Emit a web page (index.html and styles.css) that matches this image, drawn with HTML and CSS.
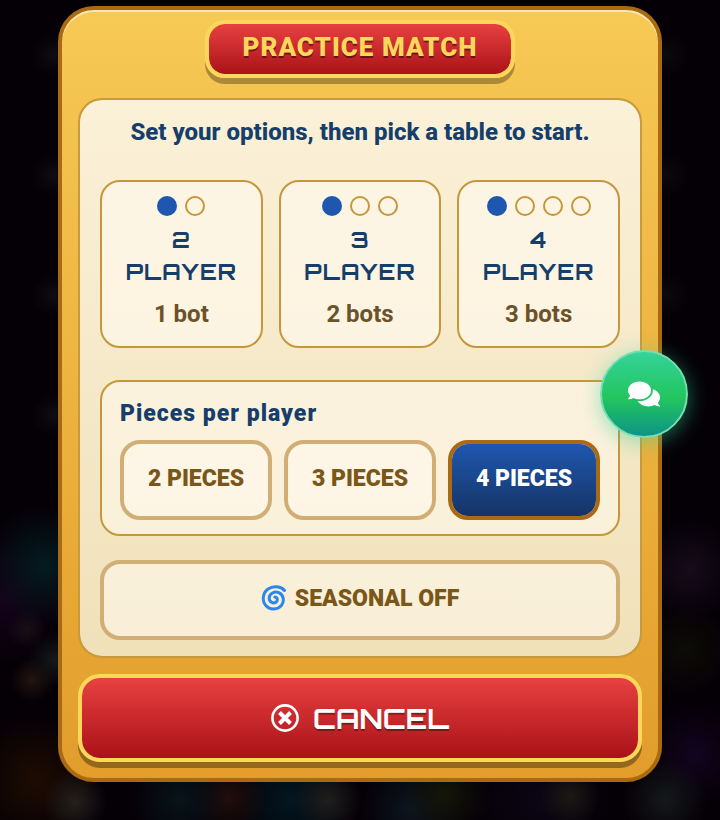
FILE: index.html
```html
<!DOCTYPE html>
<html lang="en">
<head>
  <meta charset="UTF-8" />
  <meta name="viewport" content="width=device-width, initial-scale=1.0" />
  <title>Practice Match</title>
  <link rel="stylesheet" href="styles.css">
</head>
<body>
  <main class="overlay">
    <section class="modal" role="dialog" aria-labelledby="modal-title">
      <h1 class="modal-title" id="modal-title">PRACTICE MATCH</h1>

      <div class="panel">
        <p class="intro">Set your options, then pick a table to start.</p>

        <div class="tables">
          <button type="button" class="table-card">
            <span class="seats"><i class="seat taken"></i><i class="seat"></i></span>
            <span class="table-name">2<br>PLAYER</span>
            <span class="bots">1 bot</span>
          </button>
          <button type="button" class="table-card">
            <span class="seats"><i class="seat taken"></i><i class="seat"></i><i class="seat"></i></span>
            <span class="table-name">3<br>PLAYER</span>
            <span class="bots">2 bots</span>
          </button>
          <button type="button" class="table-card">
            <span class="seats"><i class="seat taken"></i><i class="seat"></i><i class="seat"></i><i class="seat"></i></span>
            <span class="table-name">4<br>PLAYER</span>
            <span class="bots">3 bots</span>
          </button>
        </div>

        <div class="pieces" role="group" aria-labelledby="pieces-label">
          <h2 class="pieces-label" id="pieces-label">Pieces per player</h2>
          <div class="pieces-row">
            <button type="button" class="option">2 PIECES</button>
            <button type="button" class="option">3 PIECES</button>
            <button type="button" class="option active" aria-pressed="true">4 PIECES</button>
          </div>
        </div>

        <button type="button" class="option seasonal">
          <svg class="cyclone" viewBox="0 0 26 26" aria-hidden="true">
            <path d="M23.500 5.500C20 1 12 .5 7 4C1.500 8 .8 16 4.800 20.500C9 25.300 17 24.800 20.500 20.300C23.800 16 22.500 9.500 17.800 7.600C13.500 6 8.300 8.500 8.200 13C8.200 17.300 12.500 19 15.200 17C17.300 15.200 16.300 12 13.800 12" />
          </svg>
          SEASONAL OFF
        </button>
      </div>

      <button type="button" class="cancel">
        <svg class="cancel-icon" viewBox="0 0 28 28" aria-hidden="true">
          <circle cx="14" cy="14" r="12.600" />
          <path class="cross" d="M8.500 8.500l11 11M19.500 8.500l-11 11" />
        </svg>
        CANCEL
      </button>
    </section>
  </main>

  <button type="button" class="chat" aria-label="Chat">
    <svg viewBox="0 32 576 448" aria-hidden="true">
      <path d="M416 192c0-88.400-93.100-160-208-160S0 103.600 0 192c0 34.300 14.100 65.900 38 92-13.400 30.200-35.500 54.200-35.800 54.500-2.200 2.300-2.800 5.700-1.500 8.700S4.800 352 8 352c36.600 0 66.900-12.300 88.700-25 32.200 15.700 70.300 25 111.300 25 114.900 0 208-71.600 208-160zm122 220c23.900-26 38-57.700 38-92 0-66.900-53.500-124.200-129.300-148.100.9 6.600 1.300 13.300 1.300 20.100 0 105.900-107.700 192-240 192-10.800 0-21.300-.8-31.700-1.900C207.800 439.600 281.800 480 368 480c41 0 79.100-9.200 111.300-25 21.800 12.700 52.100 25 88.700 25 3.200 0 6.100-1.900 7.300-4.800 1.300-2.900.7-6.300-1.500-8.700-.3-.3-22.400-24.200-35.800-54.500z" />
    </svg>
  </button>
</body>
</html>
```
FILE: styles.css
```css
* { box-sizing: border-box; margin: 0; padding: 0; }

body {
  min-height: 100vh;
  font-family: Roboto, "Liberation Sans", sans-serif;
  color: #153e6b;
  background-color: #050006;
  /* dimmed lobby lights behind the dialog */
  background-image:
    radial-gradient(circle at 54px 55px, #0e0d0e, transparent 22px),
    radial-gradient(circle at 54px 175px, #0e0d0e, transparent 22px),
    radial-gradient(circle at 54px 295px, #0e0d0e, transparent 22px),
    radial-gradient(circle at 54px 415px, #0e0d0e, transparent 22px),
    radial-gradient(circle at 666px 55px, #0b0a0b, transparent 22px),
    radial-gradient(circle at 666px 175px, #0b0a0b, transparent 22px),
    radial-gradient(circle at 666px 295px, #0b0a0b, transparent 22px),
    radial-gradient(circle at 45px 565px, #041b20, transparent 60px),
    radial-gradient(circle at 0 600px, #15021b, transparent 65px),
    radial-gradient(circle at 26px 628px, #1c1714, transparent 20px),
    radial-gradient(circle at 32px 680px, #20150f, transparent 22px),
    radial-gradient(circle at 55px 660px, #15191b, transparent 28px),
    radial-gradient(circle at 75px 802px, #24201c, transparent 32px),
    radial-gradient(circle at 35px 780px, #1e0c02, transparent 65px),
    radial-gradient(circle at 180px 800px, #08141a, transparent 50px),
    radial-gradient(circle at 228px 798px, #220e0b, transparent 38px),
    radial-gradient(circle at 328px 800px, #201e1c, transparent 34px),
    radial-gradient(circle at 290px 800px, #021720, transparent 60px),
    radial-gradient(circle at 445px 795px, #141509, transparent 45px),
    radial-gradient(circle at 410px 810px, #0c1520, transparent 50px),
    radial-gradient(circle at 570px 797px, #1c1914, transparent 30px),
    radial-gradient(circle at 540px 800px, #0c0515, transparent 70px),
    radial-gradient(circle at 665px 800px, #15191b, transparent 42px),
    radial-gradient(circle at 695px 755px, #12041f, transparent 50px),
    radial-gradient(circle at 690px 570px, #160c1b, transparent 50px),
    radial-gradient(circle at 685px 650px, #0d0c06, transparent 45px);
}

button {
  font-family: inherit;
  color: inherit;
  cursor: pointer;
}

.overlay {
  display: flex;
  justify-content: center;
  padding: 6px 16px 38px;
}

.modal {
  display: flex;
  flex-direction: column;
  width: 100%;
  max-width: 604px;
  padding: 10px 16px 16px;
  border: 4px solid #a96a13;
  border-radius: 36px;
  background: linear-gradient(#f7c955, #e29d2b);
  background-origin: border-box;
  box-shadow: inset 0 2px 0 rgba(255, 255, 255, 0.6);
}

.modal-title {
  align-self: center;
  padding: 0 34px 4px;
  border: 4px solid #ffd65c;
  border-radius: 20px;
  background: linear-gradient(#e84141, #aa1217) padding-box;
  box-shadow: 0 6px 0 rgba(0, 0, 0, 0.3);
  color: #ffd65c;
  font-size: 26px;
  font-weight: 900;
  line-height: 46px;
  letter-spacing: 1px;
  text-shadow: 0 2px 0 rgba(0, 0, 0, 0.45);
}

.panel {
  margin-top: 20px;
  padding: 16px 20px;
  border: 2px solid #c99a3b;
  border-radius: 24px;
  background: linear-gradient(#fbf1d8, #f0e1b9) padding-box;
}

.intro {
  font-size: 24px;
  font-weight: 800;
  line-height: 32px;
  text-align: center;
}

.tables {
  display: grid;
  grid-template-columns: repeat(3, 1fr);
  gap: 16px;
  margin-top: 32px;
}

.table-card {
  display: flex;
  flex-direction: column;
  align-items: center;
  padding: 14px 8px 16px;
  border: 2px solid #c6973a;
  border-radius: 20px;
  background: rgba(255, 248, 235, 0.7);
}

.seats {
  display: flex;
  gap: 8px;
}

.seat {
  width: 20px;
  height: 20px;
  border: 2px solid #c6973a;
  border-radius: 50%;
}

.seat.taken {
  border-color: #1f57b0;
  background: #1f57b0;
}

.table-name {
  margin-top: 8px;
  font-family: Orbitron, "DejaVu Sans", sans-serif;
  font-size: 22px;
  font-weight: 700;
  line-height: 32px;
  letter-spacing: 1px;
}

.bots {
  margin-top: 10px;
  color: #6b5228;
  font-size: 24px;
  font-weight: 700;
  line-height: 32px;
}

.pieces {
  margin-top: 32px;
  padding: 16px 18px 14px;
  border: 2px solid #c6973a;
  border-radius: 20px;
  background: rgba(255, 248, 235, 0.6);
}

.pieces-label {
  font-size: 23px;
  font-weight: 900;
  line-height: 32px;
  letter-spacing: 1px;
}

.pieces-row {
  display: grid;
  grid-template-columns: repeat(3, 1fr);
  gap: 12px;
  margin-top: 10px;
}

.option {
  min-height: 80px;
  padding-bottom: 4px;
  border: 4px solid #d0ae75;
  border-radius: 20px;
  background: rgba(255, 248, 235, 0.6) padding-box;
  color: #7a5718;
  font-size: 23px;
  font-weight: 900;
}

.option.active {
  border-color: #a96a13;
  background: linear-gradient(#1f57b0, #153465) padding-box;
  color: #fff;
}

.seasonal {
  display: flex;
  align-items: center;
  justify-content: center;
  gap: 8px;
  width: 100%;
  margin-top: 24px;
}

.cyclone {
  width: 26px;
  height: 26px;
  fill: none;
  stroke: #2b87ec;
  stroke-width: 3;
  stroke-linecap: round;
}

.cancel {
  display: flex;
  align-items: center;
  justify-content: center;
  gap: 14px;
  min-height: 88px;
  margin-top: 16px;
  border: 4px solid #ffd65c;
  border-radius: 22px;
  background: linear-gradient(#e84141, #aa1217) padding-box;
  box-shadow: 0 6px 0 rgba(0, 0, 0, 0.35);
  color: #fff;
  font-family: Orbitron, "DejaVu Sans", sans-serif;
  font-size: 28px;
  font-weight: 700;
  text-shadow: 0 2px 0 rgba(0, 0, 0, 0.35);
}

.cancel-icon {
  width: 28px;
  height: 28px;
  fill: none;
  stroke: #fff;
  stroke-width: 2.600;
}

.cancel-icon .cross {
  stroke-width: 4;
}

/* floating chat button */
.chat {
  position: fixed;
  top: 350px;
  right: 32px;
  display: flex;
  align-items: center;
  justify-content: center;
  width: 88px;
  height: 88px;
  border: 2px solid #76deb0;
  border-radius: 50%;
  background: linear-gradient(#34d399, #22c55e 55%, #0d9488);
  box-shadow: 0 4px 20px rgba(52, 211, 153, 0.5);
}

.chat svg {
  width: 32px;
  height: 26px;
  fill: #fff;
}
```
